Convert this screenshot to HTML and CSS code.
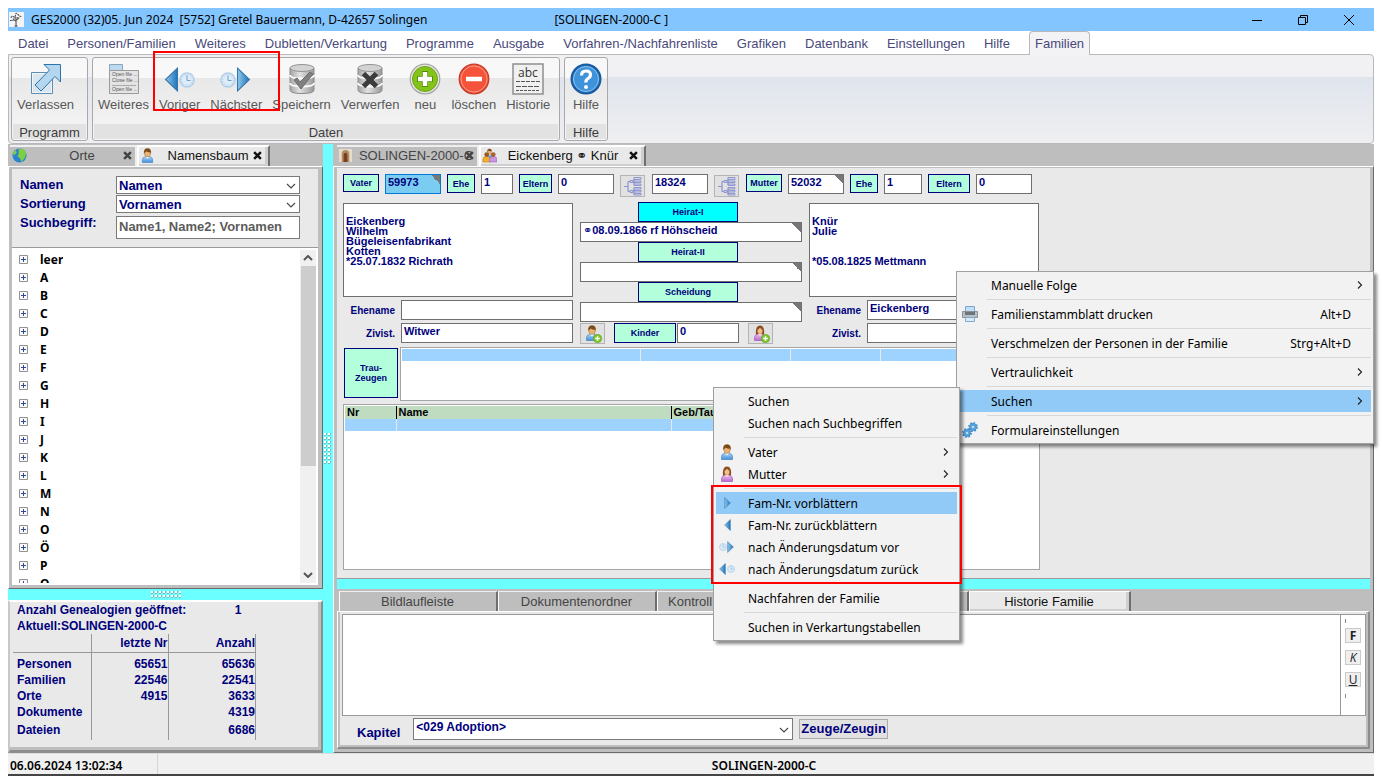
FILE: index.html
```html
<!DOCTYPE html>
<html lang="de">
<head>
<meta charset="utf-8">
<title>GES2000</title>
<link rel="stylesheet" href="styles.css">
</head>
<body>
<svg class="sprite" aria-hidden="true">
  <defs>
    <linearGradient id="g-blue" x1="0" y1="0" x2="1" y2="0"><stop offset="0" stop-color="#8fc9ec"/><stop offset="1" stop-color="#1f74b8"/></linearGradient>
    <linearGradient id="g-shirt" x1="0" y1="0" x2="0" y2="1"><stop offset="0" stop-color="#b4d8f6"/><stop offset="1" stop-color="#3f8fdc"/></linearGradient>
    <linearGradient id="g-pink" x1="0" y1="0" x2="0" y2="1"><stop offset="0" stop-color="#ecc4f2"/><stop offset="1" stop-color="#b868cc"/></linearGradient>
    <linearGradient id="g-can" x1="0" y1="0" x2="1" y2="0"><stop offset="0" stop-color="#a4a4a4"/><stop offset=".4" stop-color="#e2e2e2"/><stop offset="1" stop-color="#989898"/></linearGradient>
  </defs>
  <symbol id="man" viewBox="0 0 16 16"><path d="M2.500 15.500v-3Q2.500 10 6 9h4q3.500 1 3.500 3.500v3z" fill="url(#g-shirt)" stroke="#4a84c0" stroke-width=".7"/><path d="M6 9l2 2.500L10 9z" fill="#fff"/><ellipse cx="8" cy="5.500" rx="3.200" ry="4" fill="#e8b478" stroke="#9a6a30" stroke-width=".5"/><path d="M4.200 6.500Q3.500.3 8 .3T11.800 6.500L11 4.500Q8 5 6.500 3.500 5.500 5 4.800 5z" fill="#7c4a16"/></symbol>
  <symbol id="woman" viewBox="0 0 16 16"><path d="M4 10Q3 .5 8 .5T12 10z" fill="#8a4e22"/><path d="M2.500 15.500v-3Q2.500 10 6 9h4q3.500 1 3.500 3.500v3z" fill="url(#g-pink)" stroke="#a358b8" stroke-width=".7"/><path d="M6 9l2 2L10 9z" fill="#f8d9b8"/><ellipse cx="8" cy="5.600" rx="2.500" ry="3.500" fill="#f0be88"/><path d="M5 5.500Q5.500 1 8 1.500T11 5.500Q9 4 8 2.700 7 4 5 5.500z" fill="#8a4e22"/></symbol>
  <symbol id="plus" viewBox="0 0 10 10"><circle cx="5" cy="5" r="4.500" fill="#7cc62c" stroke="#5da018" stroke-width=".7"/><path d="M5 2.500v5M2.500 5h5" stroke="#fff" stroke-width="1.600"/></symbol>
  <symbol id="clock" viewBox="0 0 16 16"><circle cx="8" cy="8" r="7" fill="#dfedf9" stroke="#b3cfe8" stroke-width="1.600"/><circle cx="8" cy="8" r="5.200" fill="none" stroke="#93b5d8" stroke-width=".8" stroke-dasharray="1 1.720"/><path d="M8 3.500V8.500h3.500" fill="none" stroke="#6f9fcc" stroke-width="1"/></symbol>
  <symbol id="tri-r" viewBox="0 0 13 23"><path d="M1 1l11 10.500L1 22z" fill="url(#g-blue)" stroke="#3577ac" stroke-width="1"/></symbol>
  <symbol id="tri-l" viewBox="0 0 13 23"><path d="M12 1L1 11.500 12 22z" fill="url(#g-blue)" stroke="#3577ac" stroke-width="1"/></symbol>
  <symbol id="can" viewBox="0 0 32 32"><path d="M4 5v22q0 3.500 12 3.500T28 27V5z" fill="url(#g-can)" stroke="#8b8b8b"/><ellipse cx="16" cy="5" rx="12" ry="3.500" fill="#d3d3d3" stroke="#939393"/><path d="M4 12q0 3.500 12 3.500T28 12M4 20q0 3.500 12 3.500T28 20" fill="none" stroke="#fff" stroke-width="1.800"/></symbol>
  <symbol id="chev-d" viewBox="0 0 10 6"><path d="M1 1l4 4 4-4" fill="none" stroke="#444" stroke-width="1.100"/></symbol>
  <symbol id="chev-r" viewBox="0 0 6 10"><path d="M1 1.500L4.500 5 1 8.500" fill="none" stroke="#222" stroke-width="1.100"/></symbol>
  <symbol id="box" viewBox="0 0 9 9"><path d="M.5.5h8v8h-8z" fill="#fafafa" stroke="#919191"/><path d="M2 4.500h5M4.500 2v5" stroke="#2b4a9c"/></symbol>
  <symbol id="pedigree" viewBox="0 0 20 20"><g fill="none" stroke="#8d93cc" stroke-width="1.200"><path d="M1 10.500h4M5 5.500v10M5 5.500h4M5 15.500h4M11 2.500v6M11 12.500v6M9 5.500h2M9 15.500h2"/></g><g fill="#cfd6f0" stroke="#8288c6" stroke-width=".8"><path d="M11 1.500h7v2h-7zM11 5h7v1.500h-7zM11 8h7v1.500h-7zM11 11.500h7V13h-7zM11 14.500h7V16h-7zM11 17.500h7V19h-7zM7 4.500h3v2H7zM7 14.500h3v2H7z"/></g></symbol>
  <symbol id="cross" viewBox="0 0 8 8"><path d="M1 1l6 6M7 1L1 7" stroke="currentColor" stroke-width="2.200"/></symbol>
  <symbol id="gear" viewBox="0 0 12 12"><circle cx="6" cy="6" r="4.200" fill="#5aa6de" stroke="#3d8aca"/><circle cx="6" cy="6" r="5" fill="none" stroke="#3d8aca" stroke-width="1.800" stroke-dasharray="2 1.930"/><circle cx="6" cy="6" r="1.200" fill="#dceefa"/></symbol>
</svg>

<div class="window">
  <header class="titlebar">
    <svg class="app-icon" viewBox="0 0 16 16"><path fill="#f4f4f4" d="M0 0h16v16H0z"/><g fill="none" stroke="#555" stroke-width="1.200"><path d="M7.500 15V7M7.500 10L4 7M7.500 9L11 6M6 15h3"/><path d="M2 6q1-2 3-1t2-2 3 0 3 1M1 9h4M6 7q2-2 4 0" stroke-dasharray="2 .6"/></g></svg>
    <span class="title">GES2000 (32)05. Jun 2024&nbsp; [5752] Gretel Bauermann, D-42657 Solingen</span>
    <span class="title-db">[SOLINGEN-2000-C ]</span>
    <div class="win-buttons">
      <button aria-label="Minimieren"><svg viewBox="0 0 12 12"><path d="M1 6.500h10" stroke="#000"/></svg></button>
      <button aria-label="Wiederherstellen"><svg viewBox="0 0 12 12"><path d="M1.500 3.500h7v7h-7zM3.500 3.500v-2h7v7h-2" fill="none" stroke="#000"/></svg></button>
      <button aria-label="Schließen"><svg viewBox="0 0 12 12"><path d="M1 1l10 10M11 1L1 11" stroke="#000"/></svg></button>
    </div>
  </header>

  <nav class="menubar">
    <button>Datei</button><button>Personen/Familien</button><button>Weiteres</button><button>Dubletten/Verkartung</button><button>Programme</button><button>Ausgabe</button><button>Vorfahren-/Nachfahrenliste</button><button>Grafiken</button><button>Datenbank</button><button>Einstellungen</button><button>Hilfe</button><button class="current">Familien</button>
  </nav>

  <section class="ribbon">
    <div class="group program">
      <div class="tools">
        <button><svg viewBox="0 0 32 32"><path d="M1.500 9.500h21v21h-21z" fill="#f2f6fa" stroke="#5b8db5"/><path d="M3 11h18v18H3z" fill="#d9e6f0"/><path d="M14 1.500h16.500V19l-5.500-5.500L11 28l-6-6L19.500 7z" fill="#b4d6ee" stroke="#2f74a8"/></svg>Verlassen</button>
      </div>
      <div class="caption">Programm</div>
    </div>
    <div class="group data">
      <div class="tools">
        <button><svg viewBox="0 0 32 32"><path d="M1.500 1.500h13v6h-13z" fill="#bcd9ef" stroke="#8ba6bb"/><path d="M1.500 7.500h29v23h-29z" fill="#e4e4e4" stroke="#9a9a9a"/><path d="M4 22.500h24" stroke="#aaa"/><g font-family="Liberation Sans" font-size="5" fill="#555"><text x="4" y="13">Open file ...</text><text x="4" y="19">Close file ...</text><text x="4" y="28">Open file ...</text></g></svg>Weiteres</button>
        <button><svg viewBox="0 0 32 32"><use href="#tri-l" y="4" width="15" height="25"/><use href="#clock" x="15" y="9" width="16" height="16"/></svg>Voriger</button>
        <button><svg viewBox="0 0 32 32"><use href="#clock" x="0" y="9" width="16" height="16"/><use href="#tri-r" x="16" y="4" width="15" height="25"/></svg>Nächster</button>
        <button><svg viewBox="0 0 32 32"><use href="#can" width="32" height="32"/><path d="M8 17l3-2 3 4 10-10 3 2-12 15z" fill="#808080" stroke="#6c6c6c"/></svg>Speichern</button>
        <button><svg viewBox="0 0 32 32"><use href="#can" width="32" height="32"/><path d="M9.500 10.500l13 13M22.500 10.500l-13 13" stroke="#3c3c3c" stroke-width="5"/></svg>Verwerfen</button>
        <button><svg viewBox="0 0 32 32"><circle cx="16" cy="16" r="14.800" fill="#e5e8e2" stroke="#a5a5a5" stroke-width="1.200"/><circle cx="16" cy="16" r="12.500" fill="#84c41a" stroke="#6aa312"/><path d="M16 8v16M8 16h16" stroke="#558c08" stroke-width="6"/><path d="M16 9v14M9 16h14" stroke="#fff" stroke-width="4.500"/></svg>neu</button>
        <button><svg viewBox="0 0 32 32"><circle cx="16" cy="16" r="14.800" fill="#f5523a" stroke="#c43a24" stroke-width="1.200"/><circle cx="16" cy="16" r="13" fill="none" stroke="#f99a88"/><path d="M8 16h16" stroke="#fff" stroke-width="4.500"/></svg>löschen</button>
        <button><svg viewBox="0 0 32 32"><path d="M1 1h30v30H1z" fill="#f0f0f0" stroke="#8e8e8e" stroke-width="1.500"/><text x="16" y="14" text-anchor="middle" font-family="Open Sans" font-size="12" fill="#333">abc</text><path d="M4 18.500h24" stroke="#555" stroke-dasharray="4 1"/><path d="M4 23.500h24" stroke="#555" stroke-dasharray="5 1"/><path d="M4 27.500h24" stroke="#555" stroke-dasharray="3 1"/></svg>Historie</button>
      </div>
      <div class="caption">Daten</div>
      <div class="mark mark-ribbon"></div>
    </div>
    <div class="group help">
      <div class="tools">
        <button><svg viewBox="0 0 32 32"><circle cx="16" cy="16" r="14.500" fill="#2a7cc8" stroke="#1a5aa0" stroke-width="2"/><circle cx="16" cy="16" r="12.500" fill="#3e93da" stroke="#8fc2ea"/><path d="M11.500 12.500Q11.500 8 16 8t4.500 4q0 2-2.500 3.500T16 19.500" fill="none" stroke="#fff" stroke-width="3.200"/><circle cx="16" cy="24" r="2" fill="#fff"/></svg>Hilfe</button>
      </div>
      <div class="caption">Hilfe</div>
    </div>
  </section>

  <main class="docks">
    <aside class="left-dock">
      <div class="tabs">
        <button class="tab orte"><svg viewBox="0 0 16 16"><circle cx="8" cy="8" r="7.500" fill="#2b82d0"/><path d="M7 1Q13 0 15 5l-1 5-4 5q-1-5-4-6Q8 5 7 1zM1 5l3-3 1 3-3 3z" fill="#7cd040"/></svg><span>Orte</span><svg class="x" viewBox="0 0 8 8"><use href="#cross"/></svg></button>
        <button class="tab active namen"><svg viewBox="0 0 16 16"><use href="#man"/></svg><span>Namensbaum</span><svg class="x" viewBox="0 0 8 8"><use href="#cross"/></svg></button>
      </div>
      <div class="frame tree-frame">
        <form class="filter">
          <label for="f-name">Namen</label>
          <div class="combo"><select id="f-name"><option>Namen</option></select><svg viewBox="0 0 10 6"><use href="#chev-d"/></svg></div>
          <label for="f-sort">Sortierung</label>
          <div class="combo"><select id="f-sort"><option>Vornamen</option></select><svg viewBox="0 0 10 6"><use href="#chev-d"/></svg></div>
          <label for="f-term">Suchbegriff:</label>
          <input id="f-term" class="term" placeholder="Name1, Name2; Vornamen">
        </form>
        <div class="tree">
          <ul>
            <li><svg><use href="#box"/></svg>leer</li><li><svg><use href="#box"/></svg>A</li><li><svg><use href="#box"/></svg>B</li><li><svg><use href="#box"/></svg>C</li><li><svg><use href="#box"/></svg>D</li><li><svg><use href="#box"/></svg>E</li><li><svg><use href="#box"/></svg>F</li><li><svg><use href="#box"/></svg>G</li><li><svg><use href="#box"/></svg>H</li><li><svg><use href="#box"/></svg>I</li><li><svg><use href="#box"/></svg>J</li><li><svg><use href="#box"/></svg>K</li><li><svg><use href="#box"/></svg>L</li><li><svg><use href="#box"/></svg>M</li><li><svg><use href="#box"/></svg>N</li><li><svg><use href="#box"/></svg>O</li><li><svg><use href="#box"/></svg>Ö</li><li><svg><use href="#box"/></svg>P</li><li><svg><use href="#box"/></svg>Q</li>
          </ul>
          <div class="scrollbar"><svg viewBox="0 0 10 6"><path d="M1 5l4-4 4 4" fill="none" stroke="#555" stroke-width="2"/></svg><div class="thumb"></div><svg viewBox="0 0 10 6"><path d="M1 1l4 4 4-4" fill="none" stroke="#555" stroke-width="2"/></svg></div>
        </div>
      </div>
      <div class="split-h"><i class="grip"></i></div>
      <div class="frame stats">
        <p>Anzahl Genealogien geöffnet: <b>1</b></p>
        <p>Aktuell:SOLINGEN-2000-C</p>
        <table>
          <thead><tr><th class="c78"></th><th class="c77">letzte Nr</th><th>Anzahl</th></tr></thead>
          <tbody>
            <tr><th>Personen</th><td>65651</td><td>65636</td></tr>
            <tr><th>Familien</th><td>22546</td><td>22541</td></tr>
            <tr><th>Orte</th><td>4915</td><td>3633</td></tr>
            <tr><th>Dokumente</th><td></td><td>4319</td></tr>
            <tr><th>Dateien</th><td></td><td>6686</td></tr>
          </tbody>
        </table>
      </div>
    </aside>

    <div class="split-v"><i class="grip"></i></div>

    <section class="right-dock">
      <div class="tabs">
        <button class="tab db"><svg viewBox="0 0 16 16"><path d="M1 1h14v14H1z" fill="#e6dccb"/><path d="M4 15V6q0-4 4-4t4 4v9z" fill="#b08a60"/><path d="M6 15V8q0-3 2-3t2 3v7z" fill="#7a3f22"/></svg><span>SOLINGEN-2000-C</span><svg class="x" viewBox="0 0 8 8"><use href="#cross"/></svg></button>
        <button class="tab active fam"><svg viewBox="0 0 16 16"><use href="#man" x="3" y="0" width="10" height="11"/><path d="M1 15v-3q0-3 4-3t4 3v3z" fill="#f0b030" stroke="#b87818" stroke-width=".6"/><circle cx="5" cy="7" r="2.500" fill="#9a5a20"/><path d="M8 15v-3q0-3 4-3t4 3v3z" fill="#c994e0" stroke="#9b62b5" stroke-width=".6"/><circle cx="12" cy="7" r="2.500" fill="#a8622c"/></svg><span>Eickenberg ⚭ Knür</span><svg class="x" viewBox="0 0 8 8"><use href="#cross"/></svg></button>
      </div>
      <div class="shell">
        <div class="family">
          <div class="id-row">
            <button class="key w36">Vater</button>
            <div class="flag"><input class="field w56 focus" value="59973" aria-label="Vater Nr"></div>
            <button class="key w28 tall">Ehe</button><input class="field w32" value="1" aria-label="Ehe Vater">
            <button class="key w33 tall">Eltern</button><input class="field w56" value="0" aria-label="Eltern Vater">
            <button class="tool" aria-label="Stammbaum Vater"><svg viewBox="0 0 20 20"><use href="#pedigree"/></svg></button>
            <input class="field w56" value="18324" aria-label="Familie Nr">
            <button class="tool" aria-label="Stammbaum Mutter"><svg viewBox="0 0 20 20"><use href="#pedigree"/></svg></button>
            <button class="key w36">Mutter</button>
            <div class="flag"><input class="field w56" value="52032" aria-label="Mutter Nr"></div>
            <button class="key w28 tall">Ehe</button><input class="field w38" value="1" aria-label="Ehe Mutter">
            <button class="key w42 tall">Eltern</button><input class="field w56" value="0" aria-label="Eltern Mutter">
          </div>

          <div class="couple">
            <div class="person">
              <textarea class="field" aria-label="Vater">Eickenberg
Wilhelm
Bügeleisenfabrikant
Kotten
*25.07.1832 Richrath</textarea>
              <div class="pair"><label for="v-name">Ehename</label><input id="v-name" class="field"></div>
              <div class="pair"><label for="v-ziv">Zivist.</label><input id="v-ziv" class="field" value="Witwer"></div>
            </div>
            <div class="events">
              <button class="key cyan">Heirat-I</button>
              <div class="flag"><input class="field" value="⚭08.09.1866 rf Höhscheid" aria-label="Heirat I"></div>
              <button class="key">Heirat-II</button>
              <div class="flag"><input class="field" aria-label="Heirat II"></div>
              <button class="key">Scheidung</button>
              <div class="flag"><input class="field" aria-label="Scheidung"></div>
              <div class="kids">
                <button class="tool" aria-label="Sohn hinzufügen"><svg viewBox="0 0 20 20"><use href="#man" x="1" y="1" width="16" height="16"/><use href="#plus" x="10" y="10" width="9" height="9"/></svg></button>
                <button class="key w62">Kinder</button><input class="field w62" value="0" aria-label="Kinder">
                <button class="tool" aria-label="Tochter hinzufügen"><svg viewBox="0 0 20 20"><use href="#woman" x="1" y="1" width="16" height="16"/><use href="#plus" x="10" y="10" width="9" height="9"/></svg></button>
              </div>
            </div>
            <div class="person">
              <textarea class="field" aria-label="Mutter">Knür
Julie


*05.08.1825 Mettmann</textarea>
              <div class="pair"><label for="m-name">Ehename</label><input id="m-name" class="field" value="Eickenberg"></div>
              <div class="pair"><label for="m-ziv">Zivist.</label><input id="m-ziv" class="field"></div>
            </div>
          </div>

          <div class="witness">
            <button class="key">Trau-<br>Zeugen</button>
            <div class="sheet"><table><tbody><tr class="sel"><td class="c238"></td><td class="c150"></td><td class="c90"></td><td></td></tr></tbody></table></div>
          </div>

          <div class="sheet children">
            <table>
              <thead><tr><th class="c51">Nr</th><th class="c275">Name</th><th class="c150">Geb/Tauf</th><th></th></tr></thead>
              <tbody><tr class="sel"><td></td><td></td><td></td><td></td></tr></tbody>
            </table>
          </div>
        </div>

        <div class="bar"></div>

        <div class="tabs lower-tabs">
          <button class="tab">Bildlaufleiste</button><button class="tab">Dokumentenordner</button><button class="tab wide">Kontroll</button><button class="tab active">Historie Familie</button>
        </div>
        <div class="lower">
          <div class="editor">
            <textarea aria-label="Historientext"></textarea>
            <div class="format"><i></i><button><b>F</b></button><button><em>K</em></button><button><u>U</u></button><i></i></div>
          </div>
          <div class="chapter">
            <label for="chap">Kapitel</label>
            <div class="combo"><select id="chap"><option>&lt;029 Adoption&gt;</option></select><svg viewBox="0 0 10 6"><use href="#chev-d"/></svg></div>
            <button>Zeuge/Zeugin</button>
          </div>
        </div>
      </div>
    </section>
  </main>

  <footer class="status"><span class="clock">06.06.2024 13:02:34</span><span class="db">SOLINGEN-2000-C</span></footer>

  <div class="menu context" role="menu">
    <button role="menuitem">Manuelle Folge<svg class="more"><use href="#chev-r"/></svg></button>
    <hr>
    <button role="menuitem"><svg class="ico" viewBox="0 0 16 16"><path d="M3.500.5h9V6h-9z" fill="#bfe0f8" stroke="#7aa7cc"/><path d="M.5 5.500h15v6H.5z" fill="#b9bfc6" stroke="#8a9097"/><path d="M3 6h10v3H3z" fill="#6e747b"/><path d="M3.500 11.500h9v4h-9z" fill="#d6ecfb" stroke="#86a9c6"/></svg>Familienstammblatt drucken<kbd>Alt+D</kbd></button>
    <hr>
    <button role="menuitem">Verschmelzen der Personen in der Familie<kbd>Strg+Alt+D</kbd></button>
    <hr>
    <button role="menuitem">Vertraulichkeit<svg class="more"><use href="#chev-r"/></svg></button>
    <hr>
    <div class="holder">
      <button role="menuitem" class="hot">Suchen<svg class="more"><use href="#chev-r"/></svg></button>
      <div class="menu sub" role="menu">
        <button role="menuitem">Suchen</button>
        <button role="menuitem">Suchen nach Suchbegriffen</button>
        <hr>
        <button role="menuitem"><svg class="ico"><use href="#man"/></svg>Vater<svg class="more"><use href="#chev-r"/></svg></button>
        <button role="menuitem"><svg class="ico"><use href="#woman"/></svg>Mutter<svg class="more"><use href="#chev-r"/></svg></button>
        <hr>
        <div class="holder">
          <button role="menuitem" class="hot"><svg class="ico" viewBox="0 0 16 16"><use href="#tri-r" x="5" y="2" width="7" height="12"/></svg>Fam-Nr. vorblättern</button>
          <button role="menuitem"><svg class="ico" viewBox="0 0 16 16"><use href="#tri-l" x="5" y="2" width="7" height="12"/></svg>Fam-Nr. zurückblättern</button>
          <button role="menuitem"><svg class="ico" viewBox="0 0 16 16"><use href="#clock" x="0" y="4" width="8" height="8"/><use href="#tri-r" x="8" y="2" width="7" height="12"/></svg>nach Änderungsdatum vor</button>
          <button role="menuitem"><svg class="ico" viewBox="0 0 16 16"><use href="#tri-l" x="0" y="2" width="7" height="12"/><use href="#clock" x="8" y="4" width="8" height="8"/></svg>nach Änderungsdatum zurück</button>
          <div class="mark mark-menu"></div>
        </div>
        <hr>
        <button role="menuitem">Nachfahren der Familie</button>
        <hr>
        <button role="menuitem">Suchen in Verkartungstabellen</button>
      </div>
    </div>
    <hr>
    <button role="menuitem"><svg class="ico" viewBox="0 0 16 16"><use href="#gear" x="0" y="6" width="10" height="10"/><use href="#gear" x="6" y="0" width="10" height="10"/></svg>Formulareinstellungen</button>
  </div>
</div>
</body>
</html>
```
FILE: styles.css
```css
* { box-sizing: border-box; }
body { margin: 0; padding: 8px; height: 100vh; min-width: 1200px; background: #fff; font-family: "Liberation Sans", "DejaVu Sans", Arial, sans-serif; font-size: 13px; color: #00007c; }
button, input, select, textarea { font: inherit; color: inherit; margin: 0; padding: 0; border: 0; border-radius: 0; outline: 0; background: none; }
button { white-space: nowrap; }
svg { display: block; flex: none; }
p, ul { margin: 0; padding: 0; list-style: none; }
.sprite { position: absolute; width: 0; height: 0; }
.window { position: relative; display: flex; flex-direction: column; height: 100%; min-height: 700px; }

.titlebar { display: flex; align-items: center; height: 23px; background: #83c5ff; color: #000; font-family: "Noto Sans", "Open Sans", sans-serif; font-size: 12px; }
.app-icon { width: 15px; height: 15px; margin: 0 7px 0 1px; }
.title-db { margin-left: 127px; }
.win-buttons { display: flex; margin: 0 2px 0 auto; }
.win-buttons button { width: 46px; height: 20px; display: grid; place-items: center; }
.win-buttons svg { width: 12px; height: 12px; }

.menubar { display: flex; gap: 19px; height: 23px; padding-left: 10px; color: #49497b; background: #fff; }
.menubar button { height: 25px; }
.menubar .current { height: 24px; padding: 0 5px; border: 1px solid #b9b9bd; border-bottom: 0; border-radius: 4px 4px 0 0; background: #f3f3f5; z-index: 1; }
.ribbon { display: flex; gap: 4px; height: 90px; padding: 2px; border: 1px solid #b9b9bd; border-radius: 0 4px 4px 4px; background: linear-gradient(#f1f1f3 0 22px, #dfe4ed 22px, #efeff1); }
.group { position: relative; display: flex; flex-direction: column; width: max-content; border: 1px solid #a9a9ab; border-radius: 3px; padding: 1px; background: linear-gradient(#f8f8f8 0 20px, #e8e8e8 20px, #f6f6f6); color: #585858; }
.program { width: 77px; }
.data { width: 468px; }
.tools { display: flex; flex: 1; gap: 10px; padding: 4px 4px 0; }
.tools button { display: flex; flex-direction: column; align-items: center; gap: 1px; min-width: 32px; line-height: 17px; }
.tools svg { width: 32px; height: 32px; }
.caption { height: 15px; line-height: 17px; text-align: center; background: #e2e2e2; color: #3c3c3c; }
.mark { position: absolute; border: 2px solid #f00; pointer-events: none; z-index: 5; }
.mark-ribbon { left: 60px; top: -7px; width: 127px; height: 60px; }

.docks { display: flex; flex: 1; min-height: 0; background: #bebebe; }
.left-dock { display: flex; flex-direction: column; width: 315px; }
.tabs { display: flex; height: 22px; flex: none; padding: 1px 0 0 2px; background: #bebebe; }
.tab { display: flex; align-items: center; justify-content: space-between; height: 21px; padding: 0 3px 3px 2px; color: #444; border-top: 2px solid #eee; border-right: 2px solid #eee; }
.tab svg { width: 15px; height: 15px; }
.tab .x { width: 9px; height: 9px; }
.tab.active { color: #111; background: #e9e9e9; border: 2px solid #fff; border-right: 2px solid #6f6f6f; border-bottom: 0; box-shadow: inset -3px -2px #cfcfcf; }
.orte { width: 127px; }
.orte span { margin-left: 14px; }
.namen { width: 133px; padding-right: 6px; padding-left: 1px; }
.namen span { margin-left: 8px; }
.db { width: 142px; padding-left: 1px; }
.db span { margin-left: 4px; }
.fam { width: 167px; padding-right: 6px; padding-left: 1px; }
.db .x { margin-left: -10px; }
.frame { border: 1px solid; border-color: #fff #6b6b6b #6b6b6b #fff; padding: 2px 4px 3px 3px; background: #bebebe; }
.tree-frame { display: flex; flex-direction: column; flex: 1; min-height: 0; }
.filter { display: grid; grid-template-columns: 96px 184px; gap: 1px 0; align-items: start; padding: 7px 8px 8px; background: #e9e9e9; border-bottom: 1px solid #9b9b9b; font-weight: bold; }
.filter label { line-height: 18px; }
.combo { position: relative; }
.combo select { appearance: none; display: block; width: 100%; height: 18px; padding-left: 2px; border: 1px solid #7a7a7a; background: #fff; }
.combo svg { position: absolute; right: 4px; top: 50%; width: 10px; height: 6px; margin-top: -2px; }
.filter .term { height: 23px; margin-top: 2px; padding: 0 2px 2px; border: 1px solid #7a7a7a; background: #fff; }
.term::placeholder { color: #5c5c5c; opacity: 1; }
.tree { display: flex; justify-content: space-between; flex: 1; min-height: 0; padding: 2px 2px 2px; background: #fff; overflow: hidden; }
.tree ul { overflow: hidden; }
.tree li { display: flex; align-items: center; gap: 12px; height: 18px; padding-left: 5px; color: #000; font: bold 12px "Noto Sans", "Open Sans", sans-serif; }
.tree li svg { width: 9px; height: 9px; }
.scrollbar { display: flex; flex-direction: column; align-items: center; justify-content: space-between; width: 16px; padding: 5px 0; background: #f0f0f0; }
.scrollbar svg { width: 10px; height: 6px; }
.thumb { width: 15px; height: 62%; margin: 5px 0 auto; background: #cdcdcd; }
.split-h { display: grid; place-items: center; height: 11px; background: #6bffff; }
.split-v { display: grid; place-items: center; width: 10px; background: #6bffff; }
.grip { width: 30px; height: 8px; background: radial-gradient(circle at 1px 1px, #fff 0 1px, #7fb5b5 1px 2px, transparent 2px) 0 0 / 4px 4px; }
.split-v .grip { width: 8px; height: 32px; }

.stats { height: 153px; font-size: 12px; font-weight: bold; background: #e9e9e9; border-width: 2px 2px 3px; border-color: #fff #8e8e8e #8e8e8e #c8c8c8; padding: 0 3px; box-shadow: inset -3px -3px #bebebe; }
.stats p { padding-left: 4px; line-height: 16px; }
.stats p b { margin-left: 45px; }
.stats table { border-collapse: collapse; width: 243px; table-layout: fixed; }
.stats th, .stats td { height: 16px; padding: 0; text-align: right; border-right: 1px solid #999; line-height: 16px; }
.stats tbody th { padding-left: 4px; text-align: left; }
.stats thead th { height: 18px; border-bottom: 1px solid #999; }
.stats tbody tr:first-child > * { height: 19px; padding-top: 3px; }
.stats tbody tr:last-child > * { height: 20px; }
.c77 { width: 77px; } .c78 { width: 78px; }

.right-dock { display: flex; flex-direction: column; flex: 1; min-width: 0; }
.right-dock > .tabs { padding-left: 4px; }
.shell { display: flex; flex-direction: column; flex: 1; min-height: 0; padding: 1px 3px 3px; border: 1px solid; border-color: #fff #6b6b6b #6b6b6b #fff; }
.family { display: flex; flex-direction: column; flex: 1; min-height: 0; padding: 6px 6px 8px; background: #e9e9e9; border-bottom: 1px solid #999; font-size: 11px; font-weight: bold; }
.field { display: block; height: 20px; padding: 0 2px 4px; border: 1px solid #6f6f6f; background: #fff; }
.focus { background: #7acdf0; border-color: #0078d7; }
.flag { position: relative; }
.flag::after { content: ""; position: absolute; right: 1px; top: 1px; width: 9px; height: 9px; background: linear-gradient(to top right, transparent 50%, #777 50%); }
.key { height: 20px; border: 1px solid #00007c; background: #b3ffdb; font-size: 9px; font-weight: bold; }
.tool { display: grid; place-items: center; width: 25px; height: 22px; border: 1px solid #b4b4b4; background: #e1e1e1; }
.tool svg { width: 20px; height: 20px; }
.id-row { display: flex; gap: 6px; align-items: flex-start; height: 28px; }
.id-row .key { height: 18px; }
.id-row .tall { height: 19px; }
.id-row .tool { margin: 1px 1px 0 0; }
.w28 { width: 28px; } .w32 { width: 32px; } .w33 { width: 33px; } .w36 { width: 36px; } .w38 { width: 38px; } .w42 { width: 42px; } .w56 { width: 56px; } .w62 { width: 62px; }
.couple { display: grid; grid-template-columns: 230px 222px 230px; gap: 7px; height: 145px; }
.person { display: flex; flex-direction: column; gap: 3px; padding-top: 1px; }
.person textarea { display: block; width: 100%; height: 94px; padding: 12px 2px 0; resize: none; line-height: 10px; overflow: hidden; }
.pair { display: grid; grid-template-columns: 52px 1fr; gap: 6px; align-items: center; text-align: right; font-size: 10px; }
.pair .field { width: 100%; font-size: 11px; }
.events { display: flex; flex-direction: column; align-items: flex-start; }
.events .flag, .events .flag .field { width: 100%; }
.events > .key { width: 100px; margin-left: 58px; }
.key.cyan { background: #00ffff; }
.kids { display: flex; align-self: stretch; gap: 1px; padding-top: 1px; }
.kids .tool { margin: 0 8px 0 0; height: 21px; }
.kids .tool:last-child { margin-left: 8px; }
.witness { display: flex; gap: 2px; }
.witness .key { width: 54px; height: 50px; margin: 1px 0 0 1px; }
.sheet { border: 1px solid #a5a5a5; padding: 1px; background: #fff; overflow: hidden; }
.sheet table { width: 100%; table-layout: fixed; border-collapse: collapse; color: #000; }
.witness .sheet { width: 641px; height: 54px; }
.sheet td { height: 12px; padding: 0; border-right: 1px solid #e9e9e9; }
.sheet th { height: 13px; padding: 0 2px; text-align: left; line-height: 13px; border-right: 1px solid #000; background: #bfdcc0; }
.sel { background: #9fd3ff; }
.children { flex: 1; width: 697px; margin-top: 3px; }
.c51 { width: 51px; } .c90 { width: 90px; } .c150 { width: 150px; } .c238 { width: 238px; } .c275 { width: 275px; }
.bar { height: 10px; background: #6bffff; }
.lower-tabs { padding-top: 2px; }
.lower-tabs .tab { width: 159px; height: 20px; justify-content: center; padding-bottom: 1px; border-left: 1px solid #fff; border-top-width: 1px; border-right-color: #6f6f6f; }
.lower-tabs .wide { width: 312px; justify-content: flex-start; padding-left: 10px; }
.lower-tabs .tab.active { width: 162px; }
.lower { border: solid; border-width: 1px 2px 2px 1px; border-color: #fff #8c8c8c #8c8c8c #fff; padding: 2px 2px 2px 4px; background: #e9e9e9; box-shadow: inset -2px -2px #bebebe, inset 2px 0 #bebebe; }
.editor { display: flex; height: 102px; border: 1px solid #999; background: #fff; }
.editor textarea { flex: 1; resize: none; border-right: 1px solid #999; }
.format { display: flex; flex-direction: column; align-items: center; gap: 7px; width: 24px; padding-top: 4px; }
.format i { width: 1px; height: 4px; margin-right: 16px; background: #888; }
.format i:first-child { margin-bottom: -2px; }
.format button { width: 16px; height: 15px; border: 1px solid #c9c9c9; background: #efefef; color: #222; font: 12px/13px "Open Sans", sans-serif; }
.chapter { display: flex; gap: 6px; align-items: center; height: 29px; padding: 0 0 4px 15px; font-weight: bold; }
.chapter label { padding: 7px 7px 0 0; }
.chapter .combo { width: 380px; font-size: 12px; }
.chapter .combo select { height: 22px; padding-bottom: 3px; }
.chapter button { height: 20px; padding: 0 1px; border: 1px solid #aaa; background: #e1e1e1; }

.status { display: flex; align-items: center; height: 23px; border-top: 1px solid #ddd; border-bottom: 2px solid #444; background: #f0f0f0; color: #000; font: 600 12px "Noto Sans", "Open Sans", sans-serif; }
.status .clock { width: 150px; padding: 3px 0 0 2px; border-right: 1px solid #d5d5d5; }
.status .db { flex: 1; padding: 3px 4px 0 0; text-align: center; }

.menu { position: absolute; padding: 2px; border: 1px solid #a0a0a0; background: #f2f2f2; color: #000; font: 12px "Noto Sans", "Open Sans", sans-serif; box-shadow: 3px 3px 3px rgba(0,0,0,.45); z-index: 10; }
.menu button { position: relative; display: flex; align-items: center; width: 100%; height: 22px; padding: 0 8px 0 32px; }
.menu hr { height: 1px; margin: 3px 0 3px 28px; border: 0; background: #d7d7d7; }
.menu .hot { background: #91c9f7; }
.menu .ico { position: absolute; left: 3px; top: 3px; width: 16px; height: 16px; }
.menu .more { width: 6px; height: 10px; margin-left: auto; }
.menu kbd { margin: 0 12px 0 auto; font: inherit; }
.holder { position: relative; }
.context { right: 0; top: 263px; width: 418px; }
.sub { right: calc(100% - 1px); top: -3px; width: 247px; }
.mark-menu { left: -5px; right: -5px; top: -7px; bottom: -4px; }
```
